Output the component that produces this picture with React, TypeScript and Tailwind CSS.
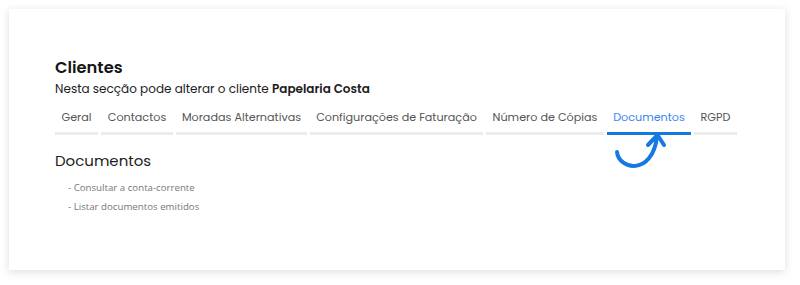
const tabs = [
  { label: "Geral", w: "w-[43px]" },
  { label: "Contactos", w: "w-[72px]" },
  { label: "Moradas Alternativas", w: "w-[131px]" },
  { label: "Configurações de Faturação", w: "w-[173px]" },
  { label: "Número de Cópias", w: "w-[118px]" },
  { label: "Documentos", w: "w-[84px]", active: true },
  { label: "RGPD", w: "w-[43px]" },
];

function CurvedArrow() {
  return (
    <svg
      width="56"
      height="44"
      viewBox="0 0 56 44"
      fill="none"
      className="absolute left-[5px] top-[-5px]"
    >
      <path
        d="M5 22 C 7 40, 40 46, 45 7"
        stroke="#1479e0"
        strokeWidth="4"
        strokeLinecap="round"
      />
      <path
        d="M36 15 L45.5 5 L52 15"
        stroke="#1479e0"
        strokeWidth="4"
        strokeLinecap="round"
        strokeLinejoin="round"
      />
    </svg>
  );
}

export default function App() {
  return (
    <div className="w-[800px] h-[285px] bg-white pt-[9px] pl-[9px] font-['Poppins','Open_Sans',sans-serif]">
      <div className="w-[776px] h-[261px] bg-white shadow-[0_2px_8px_rgba(60,70,100,0.18)] pl-[46px] pt-[48px]">
        <h1 className="text-[16.3px] leading-[22px] font-semibold text-[#151515]">
          Clientes
        </h1>
        <p className="text-[12px] leading-[18px] text-[#1c1c1c] mt-[1px]">
          Nesta secção pode alterar o cliente{" "}
          <span className="font-semibold">Papelaria Costa</span>
        </p>

        <div className="flex gap-[3px] mt-[10px]">
          {tabs.map((t) => (
            <div key={t.label} className={`relative ${t.w}`}>
              <div
                className={`text-[11.2px] leading-[18px] text-center whitespace-nowrap pb-[6px] ${
                  t.active ? "text-[#3d86ee]" : "text-[#555]"
                }`}
              >
                {t.label}
              </div>
              <div
                className={`h-[3px] ${
                  t.active ? "bg-[#1479e0]" : "bg-[#ececec]"
                }`}
              />
              {t.active && (
                <div className="relative">
                  <CurvedArrow />
                </div>
              )}
            </div>
          ))}
        </div>

        <h2 className="text-[15px] leading-[22px] text-[#1c1c1c] mt-[15px]">
          Documentos
        </h2>
        <ul className="mt-[6px] ml-[13px] font-['Open_Sans',sans-serif] text-[9.7px] text-[#777]">
          <li className="leading-[19px]">- Consultar a conta-corrente</li>
          <li className="leading-[19px]">- Listar documentos emitidos</li>
        </ul>
      </div>
    </div>
  );
}
